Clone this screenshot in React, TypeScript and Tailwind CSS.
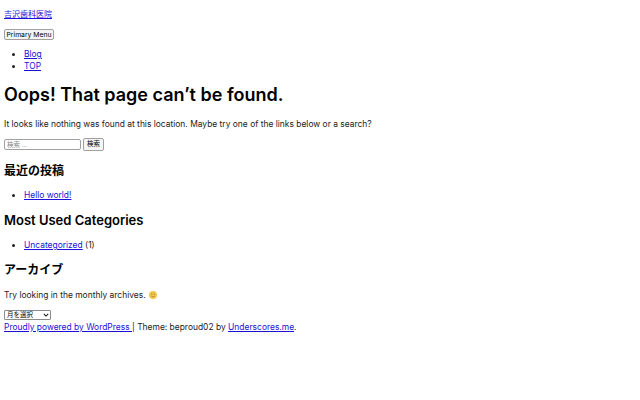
const font = { fontFamily: 'Inter, "Noto Sans CJK JP", sans-serif' };

function A({ children }: { children: React.ReactNode }) {
  return <a href="#" className="text-[#1a10d8] underline">{children}</a>;
}

function Bullet({ children }: { children: React.ReactNode }) {
  return (
    <ul className="list-disc pl-5 text-[8.45px] leading-[12px]">
      <li>{children}</li>
    </ul>
  );
}

export default function App() {
  return (
    <div className="min-h-[400px] bg-white px-1 text-[8.45px] leading-[12px] text-[#222]" style={font}>
      <p className="pt-2 text-[8px]"><A>吉沢歯科医院</A></p>
      <button className="mt-[9px] block h-[11px] w-[50px] rounded-[2px] border border-[#a0a0a0] bg-[#f4f4f4] p-0 text-[6.8px] leading-[9px] text-black">
        Primary Menu
      </button>
      <ul className="mt-[8px] list-disc pl-5">
        <li><A>Blog</A></li>
        <li><A>TOP</A></li>
      </ul>
      <h1 className="mt-[11px] text-[18px] leading-[24px] font-semibold text-black">Oops! That page can’t be found.</h1>
      <p className="mt-[11px]">It looks like nothing was found at this location. Maybe try one of the links below or a search?</p>
      <form className="mt-[8px] flex items-center gap-[2px]">
        <input
          placeholder="検索 …"
          className="h-[11px] w-[77px] rounded-[2px] border border-[#a0a0a0] px-[2px] text-[6.5px] placeholder:text-[#888]"
        />
        <button type="button" className="h-[13px] w-[21px] rounded-[2px] border border-[#a0a0a0] bg-[#f5f5f5] p-0 text-[6.5px] leading-[9px] text-black">
          検索
        </button>
      </form>
      <h2 className="mt-[12px] text-[12px] leading-[15px] font-bold text-black">最近の投稿</h2>
      <div className="mt-[11px]"><Bullet><A>Hello world!</A></Bullet></div>
      <h2 className="mt-[10px] text-[13px] leading-[18px] font-semibold text-black">Most Used Categories</h2>
      <div className="mt-[10px]"><Bullet><A>Uncategorized</A> (1)</Bullet></div>
      <h2 className="mt-[11px] text-[12px] leading-[15px] font-bold text-black">アーカイブ</h2>
      <p className="mt-[12px]">
        Try looking in the monthly archives.{' '}
        <svg viewBox="0 0 16 16" className="ml-[1px] inline-block h-[8px] w-[8px] align-[-1px]">
          <circle cx="8" cy="8" r="8" fill="#f2c84b" />
          <circle cx="5.5" cy="6" r="1.2" fill="#8a6a1c" />
          <circle cx="10.5" cy="6" r="1.2" fill="#8a6a1c" />
          <path d="M4.5 10c1.8 2.2 5.2 2.2 7 0" fill="none" stroke="#8a6a1c" strokeWidth="1.2" />
        </svg>
      </p>
      <div className="relative mt-[9px] h-[10px] w-[47px]">
        <select className="block h-[10px] w-[47px] appearance-none rounded-[1px] border border-[#8a8a8a] bg-white px-[2px] text-[6.5px] leading-[8px] text-black">
          <option>月を選択</option>
        </select>
        <svg viewBox="0 0 8 5" className="pointer-events-none absolute top-[3px] right-[2px] h-[4px] w-[6px]" fill="none" stroke="#222" strokeWidth="1.4">
          <path d="M1 1l3 3 3-3" />
        </svg>
      </div>
      <p className="mt-[1px]">
        <A>Proudly powered by WordPress </A> | Theme: beproud02 by <A>Underscores.me</A>.
      </p>
    </div>
  );
}
